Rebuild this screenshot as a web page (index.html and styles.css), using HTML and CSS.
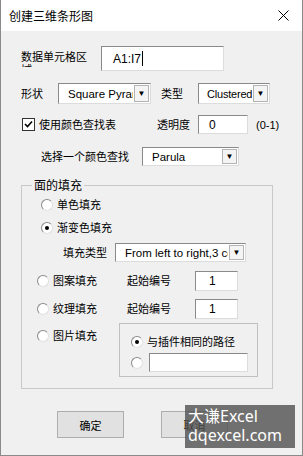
FILE: index.html
```html
<!DOCTYPE html>
<html lang="zh-CN">
<head>
  <meta charset="UTF-8" />
  <meta name="viewport" content="width=device-width, initial-scale=1.0" />
  <title>创建三维条形图</title>
  <link rel="stylesheet" href="styles.css">
</head>
<body>
  <div class="window">
    <div class="titlebar">
      <span class="title">创建三维条形图</span>
      <svg class="close" width="11" height="11" viewBox="0 0 11 11">
        <path d="M0.5 0.5 L10.5 10.5 M10.5 0.5 L0.5 10.5" stroke="#000" stroke-width="1" fill="none" />
      </svg>
    </div>

    <div class="content">
      <div class="row row-range">
        <div class="label-box"><span class="clip-label">数据单元格区域</span></div>
        <div class="textbox tb-range">A1:I7<span class="caret"></span></div>
      </div>

      <div class="row row-shape">
        <span class="lbl w37">形状</span>
        <div class="select sel-shape"><span class="sel-text">Square Pyramid</span><span class="drop">▼</span></div>
        <span class="lbl w37 ml10">类型</span>
        <div class="select sel-type"><span class="sel-text">Clustered</span><span class="drop">▼</span></div>
      </div>

      <div class="row row-check">
        <div class="check-item">
          <span class="checkbox">
            <svg width="11" height="11" viewBox="0 0 11 11"><path d="M2 5 L4.5 7.5 L9 2.5" stroke="#000" stroke-width="1.6" fill="none" /></svg>
          </span>
          <span class="lbl">使用颜色查找表</span>
        </div>
        <span class="lbl w41">透明度</span>
        <div class="textbox tb-alpha">0</div>
        <span class="lbl hint">(0-1)</span>
      </div>

      <div class="row row-lookup">
        <span class="lbl w101">选择一个颜色查找</span>
        <div class="select sel-lookup"><span class="sel-text">Parula</span><span class="drop">▼</span></div>
      </div>

      <fieldset class="group">
        <legend>面的填充</legend>

        <div class="radio-row r-solid">
          <span class="radio"></span><span class="lbl">单色填充</span>
        </div>
        <div class="radio-row r-grad">
          <span class="radio on"></span><span class="lbl">渐变色填充</span>
        </div>
        <div class="row row-filltype">
          <span class="lbl w52">填充类型</span>
          <div class="select sel-fill"><span class="sel-text">From left to right,3 colors</span><span class="drop">▼</span></div>
        </div>
        <div class="row row-pattern">
          <div class="radio-item w90"><span class="radio"></span><span class="lbl">图案填充</span></div>
          <span class="lbl w68">起始编号</span>
          <div class="textbox tb-num">1</div>
        </div>
        <div class="row row-texture">
          <div class="radio-item w90"><span class="radio"></span><span class="lbl">纹理填充</span></div>
          <span class="lbl w68">起始编号</span>
          <div class="textbox tb-num">1</div>
        </div>
        <div class="row-picture">
          <div class="radio-item w82 pic-item"><span class="radio"></span><span class="lbl">图片填充</span></div>
          <div class="subframe">
            <div class="radio-item"><span class="radio on"></span><span class="lbl">与插件相同的路径</span></div>
            <div class="radio-item path-row"><span class="radio"></span><div class="textbox tb-path"></div></div>
          </div>
        </div>
      </fieldset>

      <div class="buttons">
        <div class="btn">确定</div>
        <div class="btn">取消</div>
      </div>
    </div>

    <div class="watermark">
      <div>大谦Excel</div>
      <div>dqexcel.com</div>
    </div>
  </div>
</body>
</html>
```

FILE: styles.css
```css
body {
  margin: 0;
  font-family: "Liberation Sans", "Noto Sans CJK SC", sans-serif;
  font-size: 11px;
  color: #000;
  background: #f0f0f0;
}

.window {
  position: relative;
  width: 303px;
  height: 456px;
  box-sizing: border-box;
  background: #f0f0f0;
  border: 1px solid #8a8a8a;
  border-top: none;
  overflow: hidden;
}

.titlebar {
  height: 31px;
  background: #fff;
  display: flex;
  align-items: center;
  justify-content: space-between;
  padding: 0 13px 0 8px;
}

.title {
  font-family: "Noto Sans CJK SC", sans-serif;
  font-size: 12px;
  line-height: 16px;
}

.content {
  padding: 0 0 0 20px;
}

.row {
  display: flex;
  align-items: center;
}

.lbl {
  line-height: 14px;
  white-space: nowrap;
}

.w37 { width: 37px; }
.w41 { width: 41px; }
.w52 { width: 52px; }
.w68 { width: 68px; }
.w82 { width: 82px; }
.w90 { width: 90px; }
.w101 { width: 101px; }
.ml10 { margin-left: 10px; }

.textbox {
  box-sizing: border-box;
  background: #fff;
  border: 1px solid;
  border-color: #8a8a8a #dcdcdc #dcdcdc #8a8a8a;
  display: flex;
  align-items: center;
  line-height: 14px;
}

.row-range {
  margin-top: 15px;
  height: 25px;
}

.label-box {
  width: 80px;
}

.clip-label {
  display: block;
  width: 70px;
  height: 16px;
  line-height: 13px;
  overflow: hidden;
  white-space: normal;
}

.tb-range {
  width: 123px;
  height: 25px;
  padding-left: 11px;
  font-size: 12px;
}

.caret {
  display: inline-block;
  width: 1px;
  height: 15px;
  background: #000;
  margin-left: 1px;
}

.select {
  box-sizing: border-box;
  display: flex;
  background: #fff;
  border: 1px solid;
  border-color: #8a8a8a #dcdcdc #dcdcdc #8a8a8a;
}

.sel-text {
  flex: 1;
  min-width: 0;
  overflow: hidden;
  white-space: nowrap;
  padding-left: 9px;
  display: flex;
  align-items: center;
  font-size: 11.5px;
}

.sel-type .sel-text {
  padding-left: 8px;
  font-size: 11px;
  letter-spacing: -0.2px;
}

.drop {
  width: 15px;
  margin: 1px;
  box-sizing: border-box;
  border: 1px solid #b4b4b4;
  background: #f4f4f4;
  font-size: 8px;
  display: flex;
  align-items: center;
  justify-content: center;
  flex: none;
}

.row-shape {
  margin-top: 12px;
}

.sel-shape {
  width: 93px;
  height: 21px;
}

.sel-type {
  width: 72px;
  height: 21px;
}

.row-check {
  margin-top: 11px;
  height: 19px;
}

.check-item {
  width: 136px;
  display: flex;
  align-items: center;
}

.checkbox {
  box-sizing: border-box;
  width: 13px;
  height: 13px;
  margin-left: 1px;
  margin-right: 4px;
  background: #fff;
  border: 1px solid #333;
  display: flex;
  align-items: center;
  justify-content: center;
}

.tb-alpha {
  width: 50px;
  height: 19px;
  padding-left: 10px;
  font-size: 12px;
}

.hint {
  margin-left: 8px;
}

.row-lookup {
  margin-top: 13px;
  padding-left: 20px;
}

.sel-lookup {
  width: 97px;
  height: 19px;
}

.group {
  margin: 12px 0 0 0;
  padding: 0;
  width: 252px;
  height: 211px;
  box-sizing: border-box;
  border: 1px solid #c8c8c8;
  min-width: 0;
}

.group legend {
  margin-left: 10px;
  padding: 0 2px;
  font-family: "Noto Sans CJK SC", sans-serif;
  font-size: 12px;
  line-height: 14px;
}

.radio-row,
.radio-item {
  display: flex;
  align-items: center;
  height: 16px;
}

.radio {
  box-sizing: border-box;
  width: 12px;
  height: 12px;
  border-radius: 50%;
  background: #fff;
  border: 1px solid;
  border-color: #8a8a8a #e0e0e0 #e0e0e0 #8a8a8a;
  margin-right: 4px;
  display: flex;
  align-items: center;
  justify-content: center;
  flex: none;
}

.radio.on::after {
  content: "";
  width: 4px;
  height: 4px;
  border-radius: 50%;
  background: #000;
}

.r-solid {
  margin-top: 5px;
  padding-left: 19px;
}

.r-grad {
  margin-top: 7px;
  padding-left: 19px;
}

.row-filltype {
  margin-top: 7px;
  padding-left: 41px;
}

.sel-fill {
  width: 131px;
  height: 19px;
}

.row-pattern {
  margin-top: 9px;
  padding-left: 15px;
}

.row-texture {
  margin-top: 8px;
  padding-left: 15px;
}

.tb-num {
  width: 43px;
  height: 20px;
  padding-left: 13px;
  font-size: 12px;
}

.row-picture {
  display: flex;
  margin-top: 4px;
  padding-left: 15px;
}

.pic-item {
  margin-top: 5px;
}

.subframe {
  box-sizing: border-box;
  width: 139px;
  height: 54px;
  border: 1px solid #c0c0c0;
  padding: 10px 0 0 11px;
}

.path-row {
  margin-top: 3px;
  height: 19px;
}

.tb-path {
  width: 99px;
  height: 19px;
  margin-left: 2px;
}

.buttons {
  display: flex;
  gap: 37px;
  margin-top: 22px;
  padding-left: 36px;
}

.btn {
  box-sizing: border-box;
  width: 67px;
  height: 27px;
  background: #e1e1e1;
  border: 1px solid #adadad;
  display: flex;
  align-items: center;
  justify-content: center;
  font-family: "Noto Sans CJK SC", sans-serif;
  font-size: 11px;
}

.watermark {
  position: absolute;
  left: 184px;
  top: 405px;
  width: 110px;
  height: 43px;
  background: rgba(80, 80, 80, 0.8);
  color: #fff;
  font-family: "Noto Sans", "Noto Sans CJK SC", sans-serif;
  font-size: 16px;
  line-height: 19px;
  padding: 2px 0 0 3px;
  box-sizing: border-box;
}
```
